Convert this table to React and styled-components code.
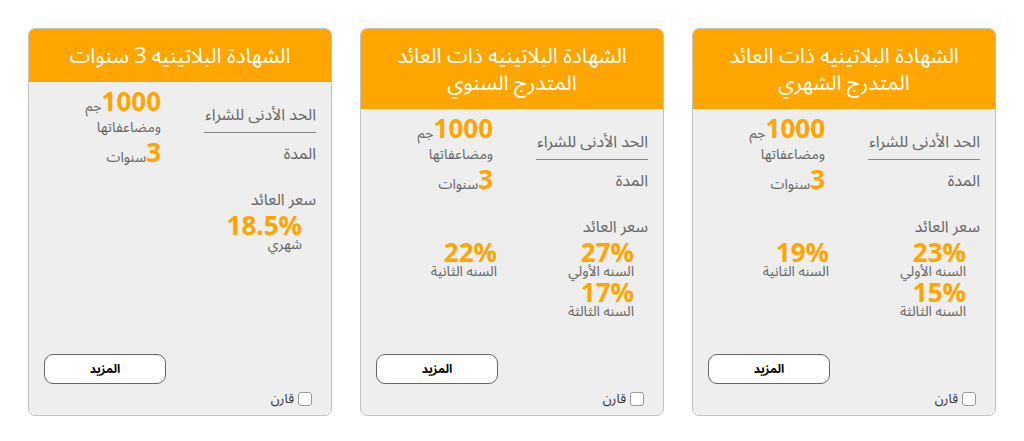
import React from "react";
import styled, { createGlobalStyle } from "styled-components";

const certificates = [
  {
    title: "الشهادة البلاتينيه ذات العائد المتدرج الشهري",
    rates: [
      { value: "23%", label: "السنه الأولي" },
      { value: "19%", label: "السنه الثانية" },
      { value: "15%", label: "السنه الثالثة" },
    ],
  },
  {
    title: "الشهادة البلاتينيه ذات العائد المتدرج السنوي",
    rates: [
      { value: "27%", label: "السنه الأولي" },
      { value: "22%", label: "السنه الثانية" },
      { value: "17%", label: "السنه الثالثة" },
    ],
  },
  {
    title: "الشهادة البلاتينيه 3 سنوات",
    rates: [{ value: "18.5%", label: "شهري" }],
  },
];

export default function App() {
  return (
    <>
      <GlobalStyle />
      <Page>
        {certificates.map((cert) => (
          <Card key={cert.title}>
            <Header>{cert.title}</Header>
            <Body>
              <InfoGrid>
                <Label $first>الحد الأدنى للشراء</Label>
                <Value>
                  <div>
                    <Big>1000</Big>جم
                  </div>
                  <div>ومضاعفاتها</div>
                </Value>
                <Label>المدة</Label>
                <Value>
                  <div>
                    <Big>3</Big>سنوات
                  </div>
                </Value>
              </InfoGrid>
              <SectionTitle>سعر العائد</SectionTitle>
              <RatesGrid>
                {cert.rates.map((r) => (
                  <Rate key={r.label}>
                    <RateValue>{r.value}</RateValue>
                    <RateLabel>{r.label}</RateLabel>
                  </Rate>
                ))}
              </RatesGrid>
            </Body>
            <Footer>
              <MoreButton>المزيد</MoreButton>
              <Compare>
                <Box type="checkbox" />
                قارن
              </Compare>
            </Footer>
          </Card>
        ))}
      </Page>
    </>
  );
}

const GlobalStyle = createGlobalStyle`
  body {
    margin: 0;
    background: #ffffff;
    font-family: "Open Sans", "Noto Sans Arabic", "Noto Sans Arabic UI", "Noto Naskh Arabic", "Noto Sans", "DejaVu Sans", sans-serif;
  }
`;

const Page = styled.div`
  direction: rtl;
  display: flex;
  gap: 28px;
  padding: 28px 28px 0 27px;
  align-items: stretch;
  height: 388px;
`;

const Card = styled.div`
  width: 304px;
  display: flex;
  flex-direction: column;
  background: #eeeeee;
  border: 1px solid #c4c4c4;
  border-radius: 7px;
  overflow: hidden;
  box-sizing: border-box;
`;

const Header = styled.div`
  background: #ffa500;
  color: #ffffff;
  font-size: 21px;
  line-height: 27px;
  text-align: center;
  padding: 13px 26px 13px;
`;

const Body = styled.div`
  flex: 1;
  padding: 9px 15px 0;
`;

const InfoGrid = styled.div`
  display: grid;
  grid-template-columns: 112px 1fr;
  column-gap: 43px;
`;

const Label = styled.div`
  display: flex;
  align-items: center;
  box-sizing: border-box;
  height: ${(p) => (p.$first ? "42px" : "34px")};
  padding-top: ${(p) => (p.$first ? "6px" : "0")};
  font-size: 16px;
  white-space: nowrap;
  color: #666666;
  border-bottom: ${(p) => (p.$first ? "1px solid #888888" : "none")};
`;

const Value = styled.div`
  display: flex;
  flex-direction: column;
  justify-content: center;
  font-size: 14px;
  line-height: 21px;
  color: #666666;
  white-space: nowrap;
`;

const Big = styled.span`
  font-size: 26px;
  font-weight: 700;
  color: #ffa500;
  line-height: 21px;
`;

const SectionTitle = styled.div`
  margin-top: 15px;
  font-size: 16px;
  color: #666666;
  line-height: 26px;
`;

const RatesGrid = styled.div`
  display: grid;
  grid-template-columns: 137px 137px;
  padding-right: 14px;
`;

const Rate = styled.div`
  display: flex;
  flex-direction: column;
  height: 40px;
`;

const RateValue = styled.div`
  font-size: 26px;
  font-weight: 700;
  color: #ffa500;
  line-height: 22px;
  padding-top: 2px;
`;

const RateLabel = styled.div`
  font-size: 14px;
  color: #666666;
  line-height: 16px;
  white-space: nowrap;
`;

const Footer = styled.div`
  display: flex;
  flex-direction: column;
  padding: 0 19px 9px 15px;
`;

const MoreButton = styled.button`
  align-self: flex-end;
  width: 122px;
  height: 30px;
  background: #ffffff;
  border: 1px solid #666666;
  border-radius: 9px;
  font-family: inherit;
  font-size: 12px;
  font-weight: 700;
  color: #000000;
`;

const Compare = styled.label`
  display: flex;
  align-items: center;
  gap: 4px;
  height: 14px;
  margin-top: 8px;
  font-size: 13px;
  color: #333333;
`;

const Box = styled.input`
  appearance: none;
  margin: 0;
  width: 14px;
  height: 14px;
  background: #ffffff;
  border: 1px solid #999999;
  border-radius: 3px;
`;
